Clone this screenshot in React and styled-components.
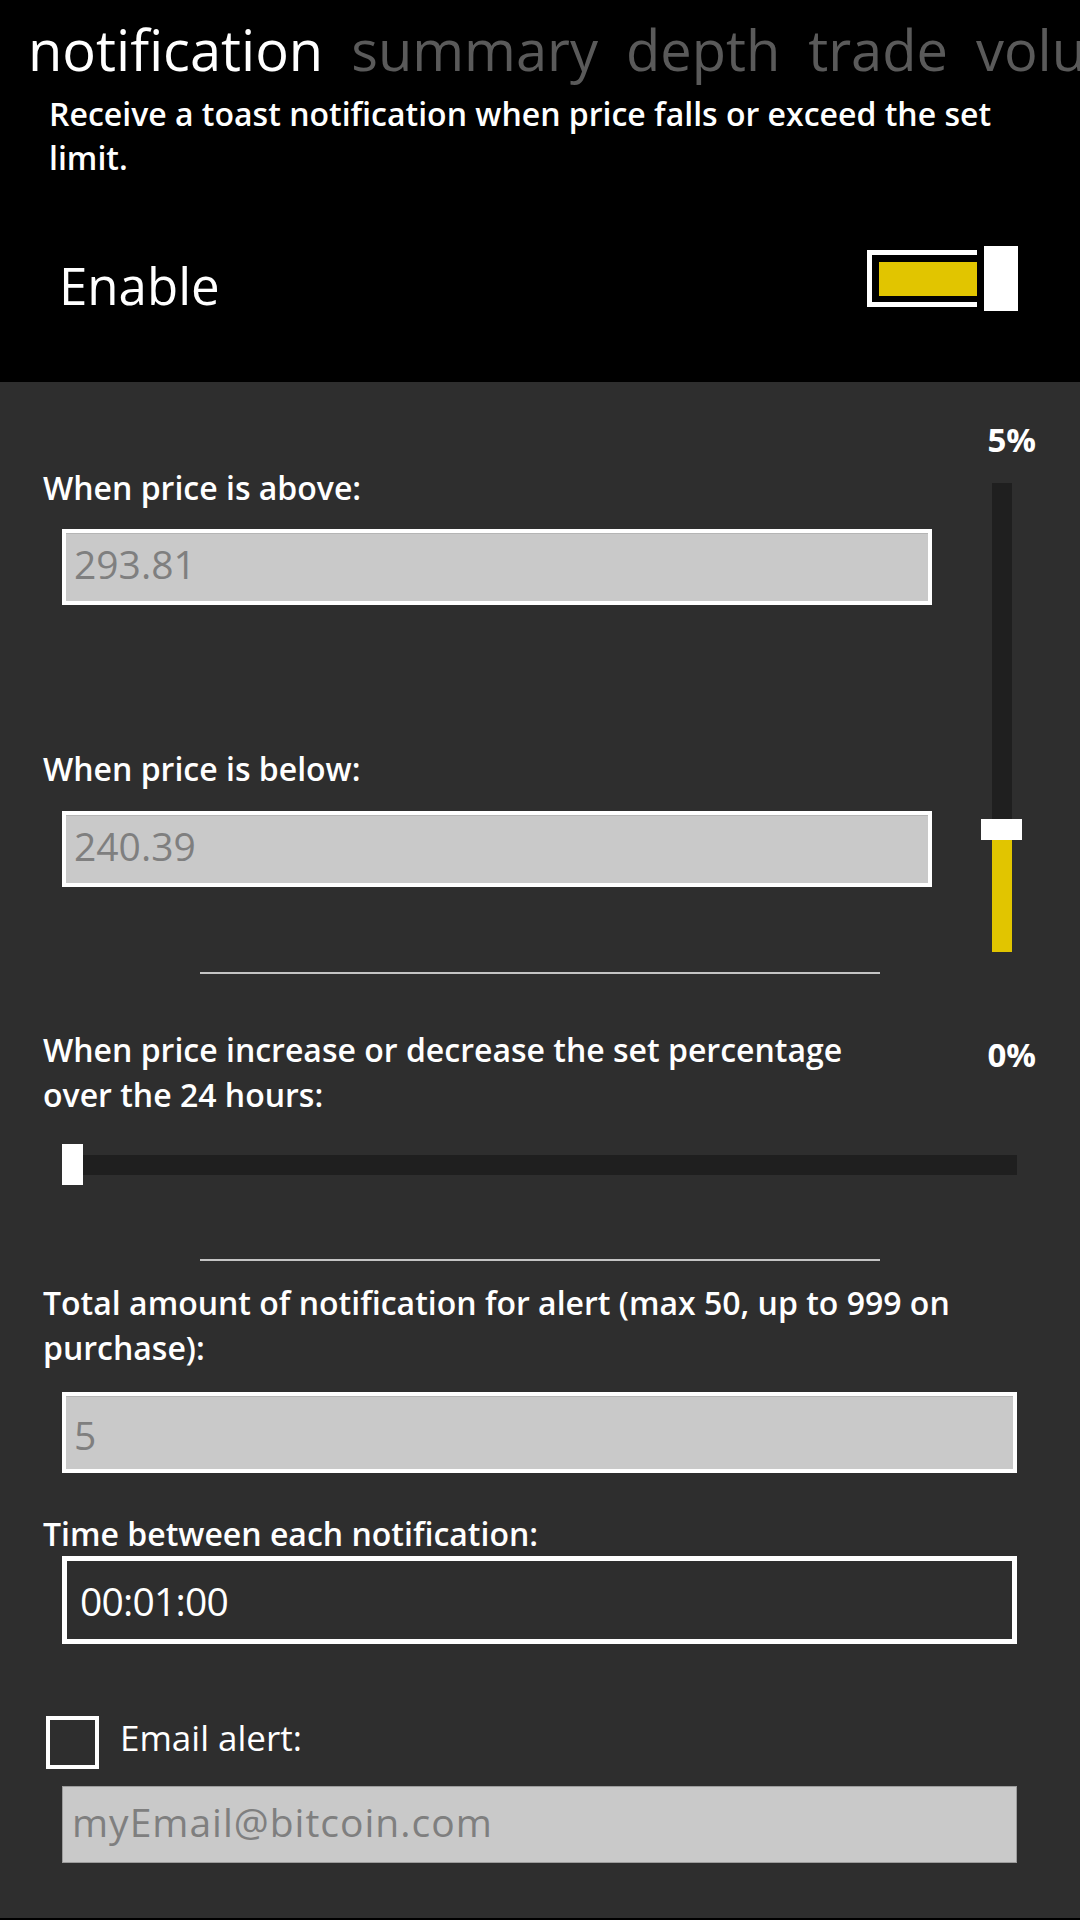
import React from 'react'
import styled, {createGlobalStyle} from 'styled-components'

const GlobalStyle = createGlobalStyle`
  html, body {
    margin:0;
    padding:0;
    background:#000;
  }
  body {
    font-family:"Open Sans", "Noto Sans", sans-serif;
    color:#fff;
  }
  * {
    box-sizing:border-box;
  }
`

function App() {
    return (
        <Page>
            <GlobalStyle/>
            <Header>
                <Tabs>
                    <Tab $active>notification</Tab>
                    <Tab>summary</Tab>
                    <Tab>depth</Tab>
                    <Tab>trade</Tab>
                    <Tab>volume</Tab>
                </Tabs>
                <Description>
                    Receive a toast notification when price falls or exceed the set limit.
                </Description>
                <EnableRow>
                    <EnableText>Enable</EnableText>
                    <Toggle>
                        <ToggleTrack>
                            <ToggleFill/>
                        </ToggleTrack>
                        <ToggleThumb/>
                    </Toggle>
                </EnableRow>
            </Header>
            <Content>
                <PriceSection>
                    <Column>
                        <Label $mt={83}>When price is above:</Label>
                        <Field $mt={19} $h={76} $pt={11}>293.81</Field>
                        <Label $mt={141}>When price is below:</Label>
                        <Field $mt={20} $h={76} $pt={11}>240.39</Field>
                    </Column>
                    <SideColumn>
                        <Percent $mt={38}>5%</Percent>
                        <VSlider>
                            <VTrack/>
                            <VThumb/>
                            <VFill/>
                        </VSlider>
                    </SideColumn>
                </PriceSection>
                <Divider $mt={20}/>
                <PercentRow>
                    <Label $mt={0} $wrap={850}>
                        When price increase or decrease the set percentage over the 24 hours:
                    </Label>
                    <Percent $mt={8}>0%</Percent>
                </PercentRow>
                <HSlider>
                    <HThumb/>
                    <HTrack/>
                </HSlider>
                <Divider $mt={74}/>
                <Label $mt={19}>
                    Total amount of notification for alert (max 50, up to 999 on purchase):
                </Label>
                <Field $mt={22} $h={81} $pt={19}>5</Field>
                <Label $mt={38}>Time between each notification:</Label>
                <Field $mt={0} $h={88} $pt={20} $variant="dark">00:01:00</Field>
                <CheckRow>
                    <CheckBox/>
                    <CheckLabel>Email alert:</CheckLabel>
                </CheckRow>
                <Field $mt={17} $h={77} $pt={15} $variant="plain">myEmail@bitcoin.com</Field>
            </Content>
        </Page>
    )
}

export default App

const Page = styled.div`
    width:1080px;
    height:1920px;
    display:flex;
    flex-direction:column;
    background:#000;
    overflow:hidden;
`

const Header = styled.div`
    height:382px;
    flex-shrink:0;
    background:#000;
    display:flex;
    flex-direction:column;
`

const Tabs = styled.div`
    display:flex;
    gap:28px;
    padding:11px 0 0 28px;
    white-space:nowrap;
    overflow:hidden;
`

const Tab = styled.span`
    font-size:56px;
    line-height:76px;
    font-weight:400;
    color:${props => props.$active ? '#ffffff' : '#5a5a5a'};
`

const Description = styled.p`
    margin:5px 0 0 49px;
    max-width:975px;
    font-size:32px;
    line-height:44px;
    font-weight:600;
`

const EnableRow = styled.div`
    margin-top:66px;
    display:flex;
    justify-content:space-between;
    align-items:flex-start;
    padding:0 62px 0 59px;
`

const EnableText = styled.span`
    font-size:51px;
    line-height:65px;
    padding-top:7px;
`

const Toggle = styled.div`
    display:flex;
    align-items:flex-start;
`

const ToggleTrack = styled.div`
    margin-top:4px;
    width:110px;
    height:57px;
    border:5px solid #fff;
    border-right:none;
    padding:7px 0 6px 7px;
    display:flex;
`

const ToggleFill = styled.div`
    flex:1;
    background:#e1c500;
`

const ToggleThumb = styled.div`
    margin-left:7px;
    width:34px;
    height:65px;
    background:#fff;
`

const Content = styled.div`
    flex:1;
    background:#2e2e2e;
    border-bottom:2px solid #000;
    padding:0 44px 0 43px;
    display:flex;
    flex-direction:column;
`

const PriceSection = styled.div`
    display:flex;
`

const Column = styled.div`
    flex:1;
    display:flex;
    flex-direction:column;
`

const SideColumn = styled.div`
    width:85px;
    display:flex;
    flex-direction:column;
    align-items:flex-end;
`

const Label = styled.div`
    margin-top:${props => props.$mt}px;
    max-width:${props => props.$wrap ? props.$wrap + 'px' : 'none'};
    font-size:32px;
    line-height:45px;
    font-weight:600;
    color:#fff;
`

const Percent = styled.div`
    margin-top:${props => props.$mt}px;
    justify-self:end;
    font-size:33px;
    line-height:40px;
    font-weight:700;
    color:#fff;
    text-align:right;
`

const Field = styled.div`
    margin:${props => props.$mt}px 19px 0;
    height:${props => props.$h}px;
    padding:${props => props.$pt}px 0 0 ${props => props.$variant === 'dark' ? 13 : props.$variant === 'plain' ? 9 : 8}px;
    font-size:39px;
    line-height:39px;
    letter-spacing:${props => props.$variant === 'dark' ? '-0.8px' : props.$variant === 'plain' ? '1px' : '0'};
    white-space:nowrap;
    background:${props => props.$variant === 'dark' ? 'transparent' : '#c9c9c9'};
    color:${props => props.$variant === 'dark' ? '#fff' : '#7f7f7f'};
    border:${props => props.$variant === 'dark' ? '5px solid #fff' : props.$variant === 'plain' ? '1px solid #9c9c9c' : '4px solid #fff'};
    box-shadow:${props => props.$variant ? 'none' : 'inset 0 1px 0 #b5b5b5'};
`

const VSlider = styled.div`
    margin:23px 14px 0 0;
    width:41px;
    display:flex;
    flex-direction:column;
    align-items:center;
`

const VTrack = styled.div`
    width:20px;
    height:336px;
    background:#1f1f1f;
`

const VThumb = styled.div`
    width:41px;
    height:21px;
    background:#fff;
`

const VFill = styled.div`
    width:20px;
    height:112px;
    background:#e1c500;
`

const Divider = styled.div`
    margin:${props => props.$mt}px auto 0;
    width:680px;
    height:2px;
    background:#c4c4c4;
    flex-shrink:0;
`

const PercentRow = styled.div`
    margin-top:53px;
    display:grid;
    grid-template-columns:1fr auto;
    align-items:start;
`

const HSlider = styled.div`
    margin:27px 19px 0;
    height:41px;
    display:flex;
    align-items:center;
`

const HThumb = styled.div`
    width:21px;
    height:41px;
    background:#fff;
`

const HTrack = styled.div`
    flex:1;
    height:20px;
    background:#1f1f1f;
`

const CheckRow = styled.div`
    margin-top:72px;
    display:flex;
    align-items:flex-start;
`

const CheckBox = styled.div`
    margin-left:3px;
    width:53px;
    height:53px;
    border:4px solid #fff;
`

const CheckLabel = styled.span`
    margin-left:21px;
    font-size:35px;
    line-height:43px;
    color:#fff;
`
